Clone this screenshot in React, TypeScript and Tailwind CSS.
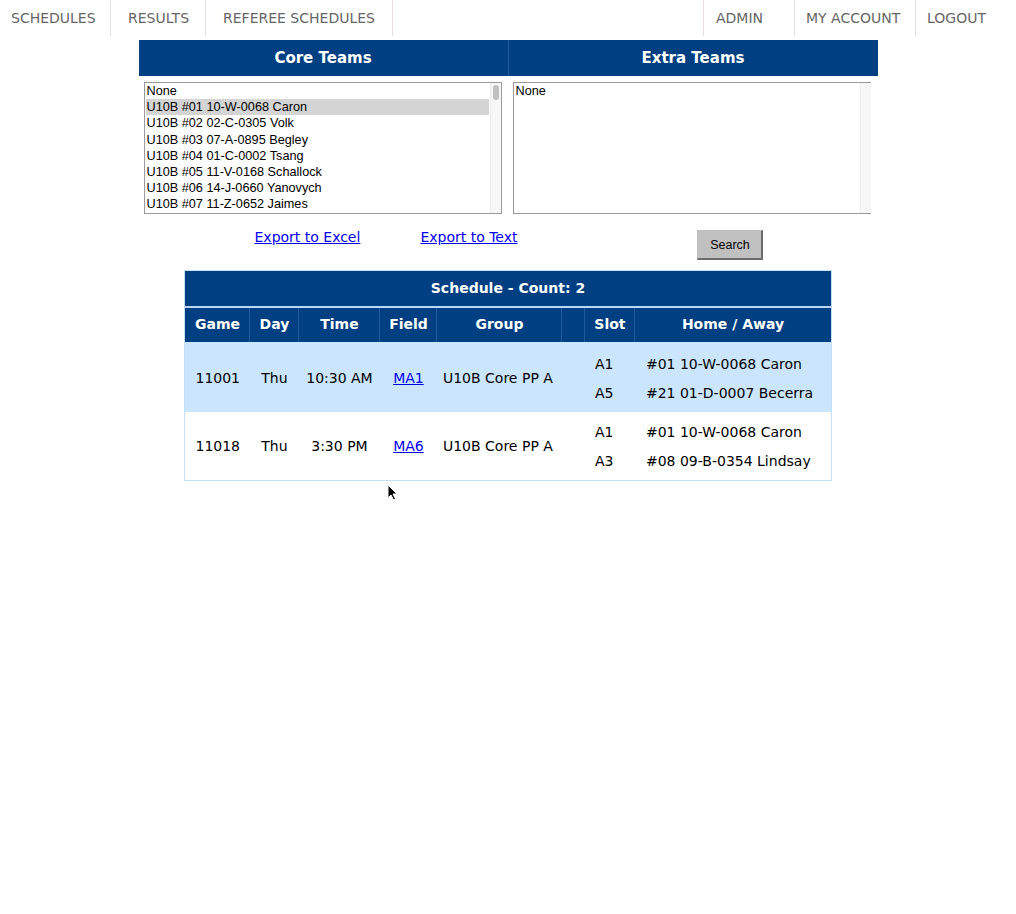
import React from 'react';

const coreTeams = [
    'None',
    'U10B #01 10-W-0068 Caron',
    'U10B #02 02-C-0305 Volk',
    'U10B #03 07-A-0895 Begley',
    'U10B #04 01-C-0002 Tsang',
    'U10B #05 11-V-0168 Schallock',
    'U10B #06 14-J-0660 Yanovych',
    'U10B #07 11-Z-0652 Jaimes',
];

type Game = {
    id: string;
    day: string;
    time: string;
    field: string;
    group: string;
    slots: [string, string][];
};

const games: Game[] = [
    {
        id: '11001',
        day: 'Thu',
        time: '10:30 AM',
        field: 'MA1',
        group: 'U10B Core PP A',
        slots: [
            ['A1', '#01 10-W-0068 Caron'],
            ['A5', '#21 01-D-0007 Becerra'],
        ],
    },
    {
        id: '11018',
        day: 'Thu',
        time: '3:30 PM',
        field: 'MA6',
        group: 'U10B Core PP A',
        slots: [
            ['A1', '#01 10-W-0068 Caron'],
            ['A3', '#08 09-B-0354 Lindsay'],
        ],
    },
];

const verdana = "font-['DejaVu_Sans',Verdana,sans-serif]";

function NavItem({ label, className }: { label: string; className: string }) {
    return (
        <a
            href="#"
            className={`flex h-9 items-center text-[14px] text-[#666] ${className}`}
        >
            {label}
        </a>
    );
}

function TeamList({ items, selected, last }: { items: string[]; selected?: number; last?: boolean }) {
    return (
        <div
            className={`flex h-[132px] w-[358px] border border-[#9a9a9a] bg-white ${last ? 'border-r-0' : ''}`}
        >
            <div className="flex-1 overflow-hidden px-px">
                {items.map((t, i) => (
                    <div
                        key={t}
                        className={`h-[16.2px] pl-[1px] text-[12.7px] leading-[16px] text-black ${
                            i === selected ? 'bg-[#d4d4d4]' : ''
                        }`}
                    >
                        {t}
                    </div>
                ))}
            </div>
            <div className="relative w-[11px] border-l border-[#ececec] bg-[#f7f7f7]">
                {selected !== undefined && (
                    <div className="absolute left-[2px] top-[2px] h-[15px] w-[6px] rounded-full bg-[#c1c1c1]" />
                )}
            </div>
        </div>
    );
}

export default function App() {
    return (
        <div className={`relative min-h-[914px] bg-white ${verdana}`}>
            <nav className="flex h-9 justify-between">
                <div className="flex">
                    <NavItem label="SCHEDULES" className="w-[111px] border-r border-[#e6e0e0] pl-[11px]" />
                    <NavItem label="RESULTS" className="w-[95px] border-r border-[#e6e0e0] pl-[17px]" />
                    <NavItem label="REFEREE SCHEDULES" className="w-[187px] border-r border-[#e6e0e0] pl-[17px]" />
                </div>
                <div className="flex">
                    <NavItem label="ADMIN" className="w-[92px] border-l border-r border-[#e6e0e0] pl-[12px]" />
                    <NavItem label="MY ACCOUNT" className="w-[121px] border-r border-[#e6e0e0] pl-[11px]" />
                    <NavItem label="LOGOUT" className="w-[100px] pl-[11px]" />
                </div>
            </nav>

            <div className="mx-auto mt-1 w-[739px]">
                <div className="flex h-9 bg-[#003f81] text-[15px] font-bold text-white">
                    <div className="flex flex-1 items-center justify-center border-r border-[#1d5a9c]">
                        Core Teams
                    </div>
                    <div className="flex flex-1 items-center justify-center">Extra Teams</div>
                </div>

                <div className="mt-[6px] flex font-['Liberation_Sans',Arial,sans-serif]">
                    <div className="w-[369px] pl-[5px]">
                        <TeamList items={coreTeams} selected={1} />
                    </div>
                    <div className="w-[370px] pl-[5px]">
                        <TeamList items={['None']} last />
                    </div>
                </div>

                <div className="flex h-[56px] items-start pl-[116px] pt-[14px] text-[14px]">
                    <a href="#" className="leading-[18px] text-[#0000ee] underline">
                        Export to Excel
                    </a>
                    <a href="#" className="ml-[60px] leading-[18px] text-[#0000ee] underline">
                        Export to Text
                    </a>
                    <button className="ml-[180px] mt-[2px] h-[30px] w-[66px] border border-b-2 border-r-2 border-[#c0c0c0] border-b-[#6b6b6b] border-r-[#6b6b6b] bg-[#c0c0c0] pt-[2px] font-['Liberation_Sans',Arial,sans-serif] text-[12.5px] text-black">
                        Search
                    </button>
                </div>
            </div>

            <table className="mx-auto w-[646px] table-fixed border-collapse border border-[#c4dff7] text-[14px]">
                <colgroup>
                    <col className="w-[65px]" />
                    <col className="w-[49px]" />
                    <col className="w-[81px]" />
                    <col className="w-[57px]" />
                    <col className="w-[125px]" />
                    <col className="w-[23px]" />
                    <col className="w-[50px]" />
                    <col className="w-[196px]" />
                </colgroup>
                <thead>
                    <tr className="h-[36px] bg-[#003f81] text-white">
                        <th colSpan={8} className="border-b-2 border-[#b9d8f5] font-bold">
                            Schedule - Count: 2
                        </th>
                    </tr>
                    <tr className="h-[35px] bg-[#003f81] text-white">
                        {['Game', 'Day', 'Time', 'Field', 'Group', '', 'Slot', 'Home / Away'].map((h, i) => (
                            <th
                                key={i}
                                className="border-l border-[#1d5a9c] px-0 text-center font-bold first:border-l-0"
                            >
                                {h}
                            </th>
                        ))}
                    </tr>
                </thead>
                <tbody>
                    {games.map((g, i) => {
                        const pad = i % 2 === 0 ? 'pt-[8px] pb-[4px]' : 'pt-[6px] pb-[4px]';
                        return (
                            <tr key={g.id} className={i % 2 === 0 ? 'bg-[#cbe6fc]' : 'bg-white'}>
                                <td className={`pl-[10px] text-black ${pad}`}>{g.id}</td>
                                <td className={`text-center text-black ${pad}`}>{g.day}</td>
                                <td className={`text-center text-black ${pad}`}>{g.time}</td>
                                <td className={`text-center ${pad}`}>
                                    <a href="#" className="text-[#0000ee] underline">
                                        {g.field}
                                    </a>
                                </td>
                                <td className={`pl-[6px] text-black ${pad}`} colSpan={2}>
                                    {g.group}
                                </td>
                                <td className={`pl-[10px] text-black ${pad}`}>
                                    {g.slots.map(([s]) => (
                                        <div key={s} className="h-[29px] leading-[29px]">
                                            {s}
                                        </div>
                                    ))}
                                </td>
                                <td className={`pl-[11px] text-black ${pad}`}>
                                    {g.slots.map(([s, team]) => (
                                        <div key={s} className="h-[29px] whitespace-nowrap leading-[29px]">
                                            {team}
                                        </div>
                                    ))}
                                </td>
                            </tr>
                        );
                    })}
                </tbody>
            </table>

            <svg
                className="absolute left-[387px] top-[484px]"
                width="11"
                height="17"
                viewBox="0 0 11 17"
            >
                <path d="M1 1 L1 14 L4 11 L6.5 16 L8.5 15 L6 10 L10 10 Z" fill="black" stroke="white" strokeWidth="1" />
            </svg>
        </div>
    );
}
